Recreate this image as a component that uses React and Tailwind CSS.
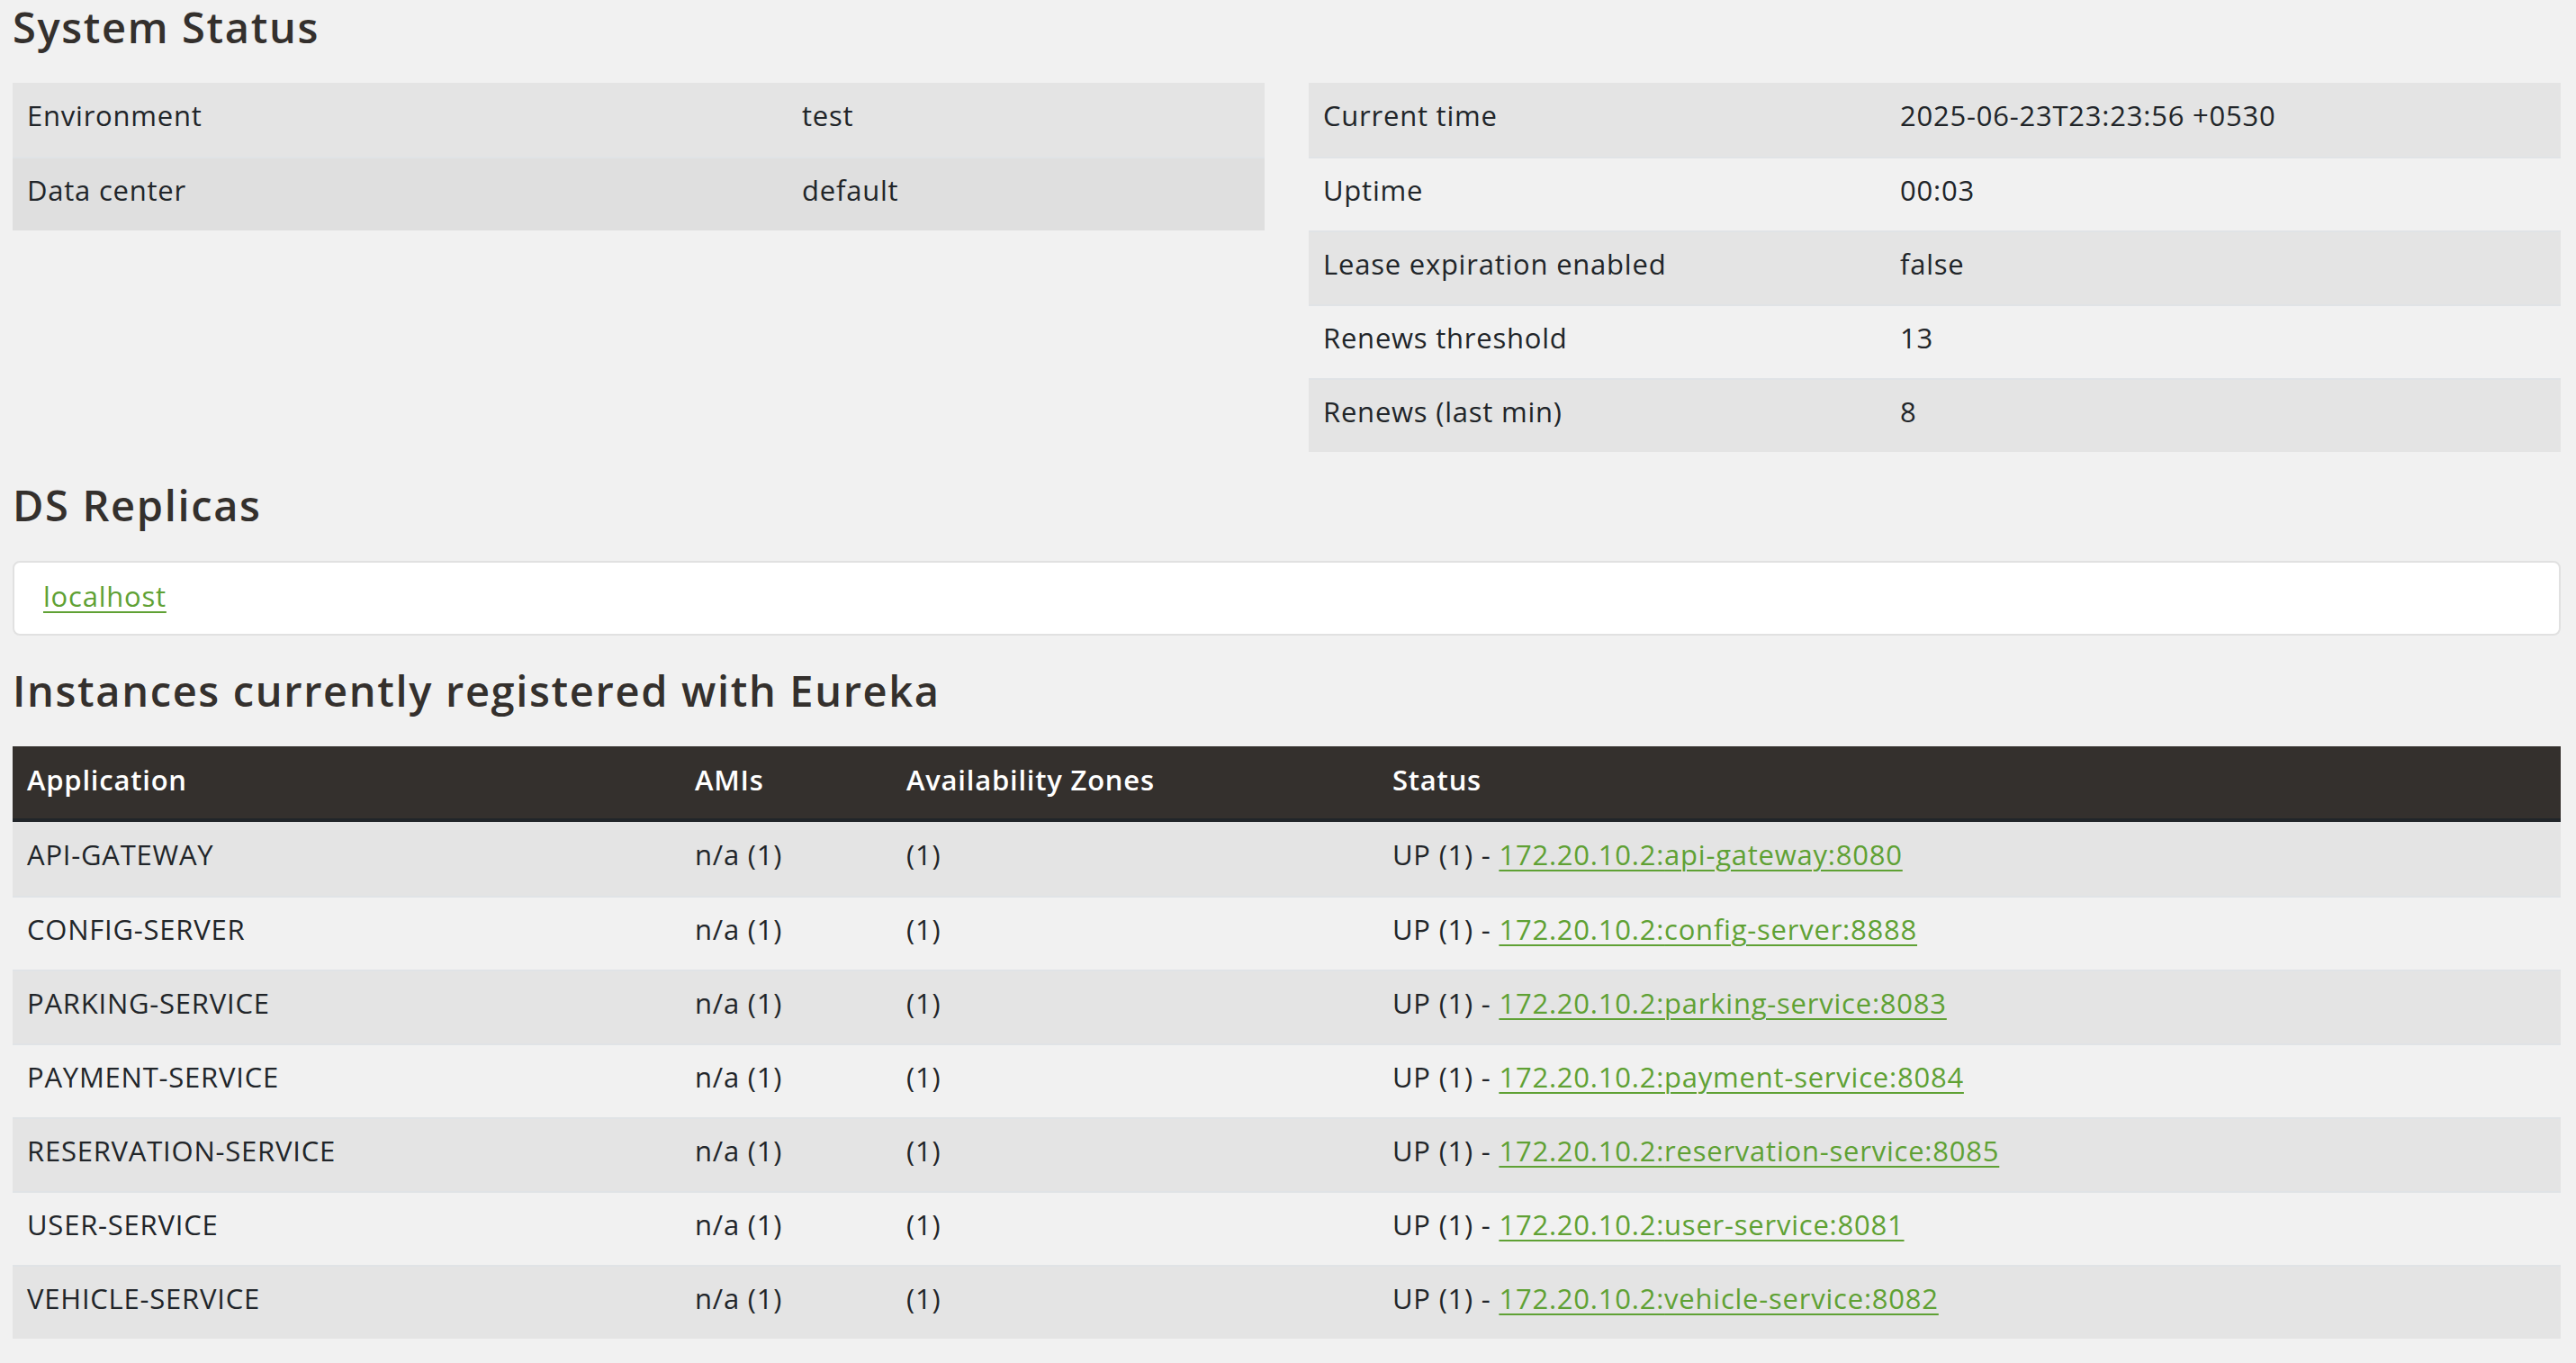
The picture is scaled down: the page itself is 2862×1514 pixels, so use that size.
const general = [
  ["Environment", "test"],
  ["Data center", "default"]
];

const runtime = [
  ["Current time", "2025-06-23T23:23:56 +0530"],
  ["Uptime", "00:03"],
  ["Lease expiration enabled", "false"],
  ["Renews threshold", "13"],
  ["Renews (last min)", "8"]
];

const instances = [
  ["API-GATEWAY", "api-gateway:8080"],
  ["CONFIG-SERVER", "config-server:8888"],
  ["PARKING-SERVICE", "parking-service:8083"],
  ["PAYMENT-SERVICE", "payment-service:8084"],
  ["RESERVATION-SERVICE", "reservation-service:8085"],
  ["USER-SERVICE", "user-service:8081"],
  ["VEHICLE-SERVICE", "vehicle-service:8082"]
];

function Heading({ children }) {
  return (
    <h2 className="text-[47px] font-semibold leading-[55px] tracking-[0.035em] text-[#34302d]">
      {children}
    </h2>
  );
}

function InfoTable({ rows, labelWidth, striped }) {
  return (
    <div className="flex-1">
      {rows.map(([label, value], i) => {
        let bg = "bg-[#e4e4e4]";
        if (striped && i % 2 === 1) bg = "bg-transparent";
        if (!striped && i === 1) bg = "bg-[#dfdfdf]";
        return (
          <div
            key={label}
            className={`flex h-[82px] items-center pb-[10px] ${bg} ${i > 0 ? "border-t-2 border-[#e0e3e6]" : ""}`}
          >
            <div className="shrink-0 px-4" style={{ width: labelWidth }}>
              {label}
            </div>
            <div className="px-4">{value}</div>
          </div>
        );
      })}
    </div>
  );
}

export default function App() {
  return (
    <main
      className="min-h-screen bg-[#f1f1f1] pl-[14px] pr-[17px] pt-[3px] text-[31px] tracking-[0.025em] text-[#212529]"
      style={{ fontFamily: '"Open Sans", "Noto Sans", sans-serif' }}
    >
      <Heading>System Status</Heading>

      <div className="mt-[34px] flex items-start gap-[49px]">
        <InfoTable rows={general} labelWidth={861} />
        <InfoTable rows={runtime} labelWidth={641} striped />
      </div>

      <div className="mt-[32px]">
        <Heading>DS Replicas</Heading>
      </div>
      <div className="mt-[34px] flex h-[83px] items-center rounded-lg border-2 border-[#e1e1e1] bg-white px-8 pb-[4px]">
        <a
          href="#"
          className="text-[#5fa134] underline decoration-2 underline-offset-[5px]"
        >
          localhost
        </a>
      </div>

      <div className="mt-[34px]">
        <Heading>Instances currently registered with Eureka</Heading>
      </div>

      <div className="mt-[34px]">
        <div className="flex h-[84px] items-center border-b-4 border-[#212529] bg-[#34302d] pb-[6px] font-semibold text-white">
          <div className="w-[742px] shrink-0 px-4">Application</div>
          <div className="w-[235px] shrink-0 px-4">AMIs</div>
          <div className="w-[540px] shrink-0 px-4">Availability Zones</div>
          <div className="px-4">Status</div>
        </div>
        {instances.map(([name, path], i) => (
          <div
            key={name}
            className={`flex h-[82px] items-center pb-[10px] ${i % 2 === 0 ? "bg-[#e4e4e4]" : "bg-transparent"} ${i > 0 ? "border-t-2 border-[#e0e3e6]" : ""}`}
          >
            <div className="w-[742px] shrink-0 px-4">{name}</div>
            <div className="w-[235px] shrink-0 px-4">n/a (1)</div>
            <div className="w-[540px] shrink-0 px-4">(1)</div>
            <div className="px-4">
              UP (1) -{" "}
              <a
                href="#"
                className="text-[#5fa134] underline decoration-2 underline-offset-[5px]"
              >
                172.20.10.2:{path}
              </a>
            </div>
          </div>
        ))}
      </div>
    </main>
  );
}
